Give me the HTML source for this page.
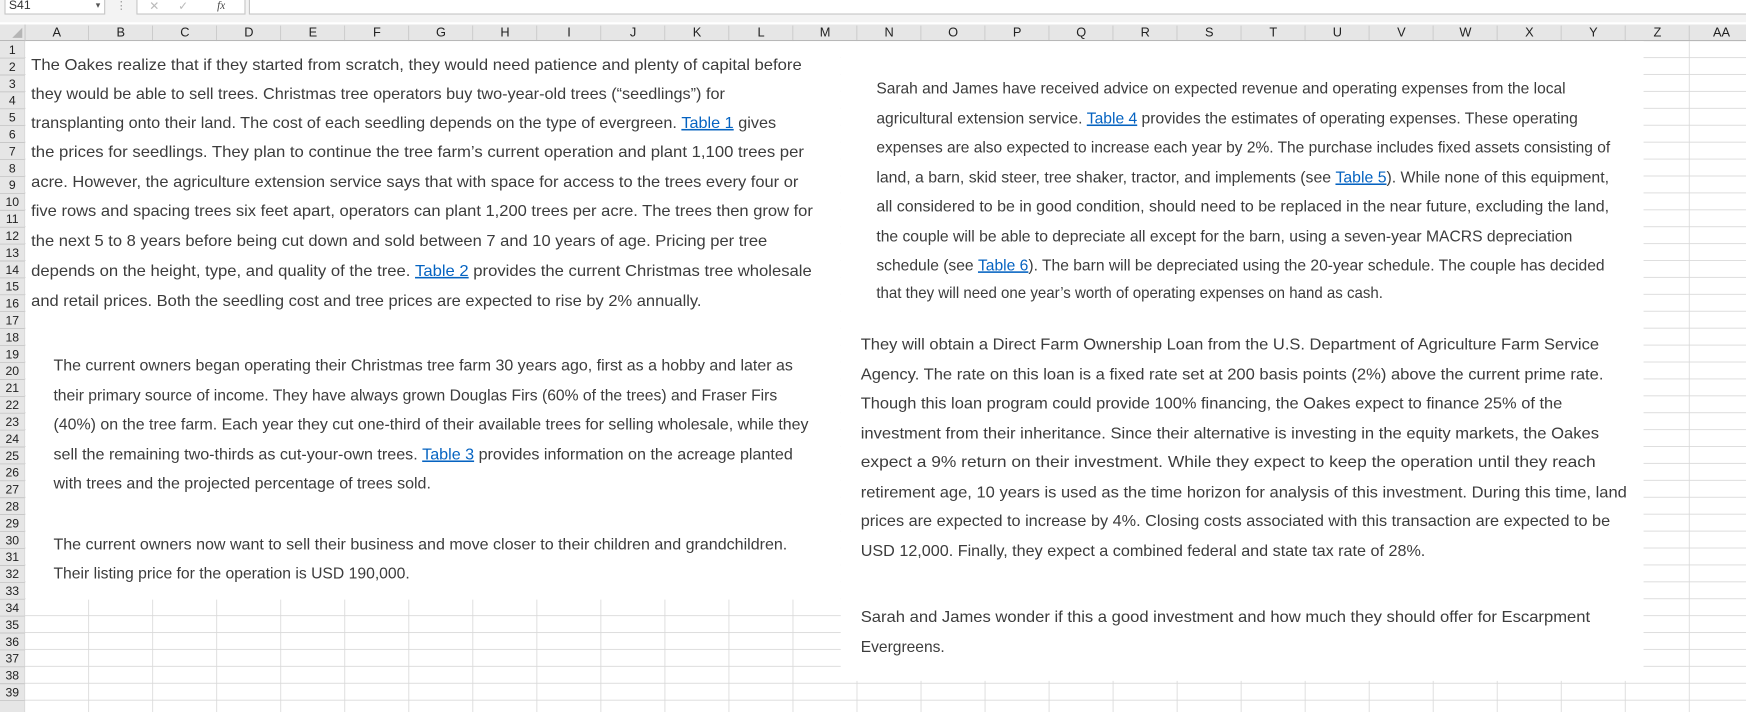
<!DOCTYPE html>
<html><head><meta charset="utf-8"><style>
html,body{margin:0;padding:0;background:#fff;overflow:hidden}
svg{display:block}
text{font-family:"Liberation Sans",sans-serif}
.t{font-size:14px;fill:#3c3c3c}
.l{fill:#0563c1;text-decoration:underline}
.h{font-size:11.5px;fill:#222;text-anchor:middle}
.r{font-size:11px;fill:#222;text-anchor:middle}
</style></head><body>
<svg width="1746" height="712" viewBox="0 0 1568 640" preserveAspectRatio="none" xmlns="http://www.w3.org/2000/svg">
<defs>
<pattern id="g" x="22.5" y="37" width="57.5" height="15.2" patternUnits="userSpaceOnUse">
<rect width="57.5" height="15.2" fill="#fff"/>
<line x1="57.2" y1="0" x2="57.2" y2="15.2" stroke="#d9d9d9" stroke-width="0.9"/>
<line x1="0" y1="14.9" x2="57.5" y2="14.9" stroke="#d9d9d9" stroke-width="0.9"/>
</pattern>
</defs>
<rect x="0" y="0" width="1568" height="20" fill="#f3f3f3"/>
<rect x="4.5" y="-2" width="89.5" height="14.6" fill="#fff" stroke="#c6c6c6"/>
<text x="8" y="8" style="font-size:11px;fill:#333">S41</text>
<text x="86" y="7" style="font-size:8px;fill:#555">▾</text>
<text x="104" y="8" style="font-size:10px;fill:#999">⋮</text>
<rect x="123" y="-2" width="97" height="14.6" fill="#fff" stroke="#c6c6c6"/>
<text x="134" y="9" style="font-size:11px;fill:#bbb">✕</text>
<text x="160" y="9" style="font-size:11px;fill:#bbb">✓</text>
<text x="195" y="8" style="font-size:10px;font-style:italic;fill:#444;font-family:'Liberation Serif',serif">fx</text>
<rect x="224" y="-2" width="1350" height="14.6" fill="#fff" stroke="#c6c6c6"/>
<rect x="0" y="22" width="1568" height="15" fill="#e6e6e6"/>
<line x1="0" y1="36.6" x2="1568" y2="36.6" stroke="#a8a8a8" stroke-width="0.8"/>
<polygon points="20,25 20,34 11,34" fill="#b5b5b5"/>
<line x1="22.5" y1="22" x2="22.5" y2="640" stroke="#c4c4c4" stroke-width="0.8"/>
<g>
<text class="h" x="51" y="33">A</text><text class="h" x="108.5" y="33">B</text><text class="h" x="166" y="33">C</text><text class="h" x="223.5" y="33">D</text><text class="h" x="281" y="33">E</text><text class="h" x="338.5" y="33">F</text><text class="h" x="396" y="33">G</text><text class="h" x="453.5" y="33">H</text><text class="h" x="511" y="33">I</text><text class="h" x="568.5" y="33">J</text><text class="h" x="626" y="33">K</text><text class="h" x="683.5" y="33">L</text><text class="h" x="741" y="33">M</text><text class="h" x="798.5" y="33">N</text><text class="h" x="856" y="33">O</text><text class="h" x="913.5" y="33">P</text><text class="h" x="971" y="33">Q</text><text class="h" x="1028.5" y="33">R</text><text class="h" x="1086" y="33">S</text><text class="h" x="1143.5" y="33">T</text><text class="h" x="1201" y="33">U</text><text class="h" x="1258.5" y="33">V</text><text class="h" x="1316" y="33">W</text><text class="h" x="1373.5" y="33">X</text><text class="h" x="1431" y="33">Y</text><text class="h" x="1488.5" y="33">Z</text><text class="h" x="1546" y="33">AA</text>
</g>
<g stroke="#c8c8c8" stroke-width="0.8">
<line x1="79.5" y1="23" x2="79.5" y2="36"/><line x1="137" y1="23" x2="137" y2="36"/><line x1="194.5" y1="23" x2="194.5" y2="36"/><line x1="252" y1="23" x2="252" y2="36"/><line x1="309.5" y1="23" x2="309.5" y2="36"/><line x1="367" y1="23" x2="367" y2="36"/><line x1="424.5" y1="23" x2="424.5" y2="36"/><line x1="482" y1="23" x2="482" y2="36"/><line x1="539.5" y1="23" x2="539.5" y2="36"/><line x1="597" y1="23" x2="597" y2="36"/><line x1="654.5" y1="23" x2="654.5" y2="36"/><line x1="712" y1="23" x2="712" y2="36"/><line x1="769.5" y1="23" x2="769.5" y2="36"/><line x1="827" y1="23" x2="827" y2="36"/><line x1="884.5" y1="23" x2="884.5" y2="36"/><line x1="942" y1="23" x2="942" y2="36"/><line x1="999.5" y1="23" x2="999.5" y2="36"/><line x1="1057" y1="23" x2="1057" y2="36"/><line x1="1114.5" y1="23" x2="1114.5" y2="36"/><line x1="1172" y1="23" x2="1172" y2="36"/><line x1="1229.5" y1="23" x2="1229.5" y2="36"/><line x1="1287" y1="23" x2="1287" y2="36"/><line x1="1344.5" y1="23" x2="1344.5" y2="36"/><line x1="1402" y1="23" x2="1402" y2="36"/><line x1="1459.5" y1="23" x2="1459.5" y2="36"/><line x1="1517" y1="23" x2="1517" y2="36"/>
</g>
<rect x="22.5" y="37" width="1546" height="603" fill="url(#g)"/>
<rect x="0" y="37" width="22" height="603" fill="#e6e6e6"/>
<g stroke="#bdbdbd" stroke-width="0.6">
<line x1="0" y1="52.2" x2="22" y2="52.2"/><line x1="0" y1="67.4" x2="22" y2="67.4"/><line x1="0" y1="82.6" x2="22" y2="82.6"/><line x1="0" y1="97.8" x2="22" y2="97.8"/><line x1="0" y1="113" x2="22" y2="113"/><line x1="0" y1="128.2" x2="22" y2="128.2"/><line x1="0" y1="143.4" x2="22" y2="143.4"/><line x1="0" y1="158.6" x2="22" y2="158.6"/><line x1="0" y1="173.8" x2="22" y2="173.8"/><line x1="0" y1="189" x2="22" y2="189"/><line x1="0" y1="204.2" x2="22" y2="204.2"/><line x1="0" y1="219.4" x2="22" y2="219.4"/><line x1="0" y1="234.6" x2="22" y2="234.6"/><line x1="0" y1="249.8" x2="22" y2="249.8"/><line x1="0" y1="265" x2="22" y2="265"/><line x1="0" y1="280.2" x2="22" y2="280.2"/><line x1="0" y1="295.4" x2="22" y2="295.4"/><line x1="0" y1="310.6" x2="22" y2="310.6"/><line x1="0" y1="325.8" x2="22" y2="325.8"/><line x1="0" y1="341" x2="22" y2="341"/><line x1="0" y1="356.2" x2="22" y2="356.2"/><line x1="0" y1="371.4" x2="22" y2="371.4"/><line x1="0" y1="386.6" x2="22" y2="386.6"/><line x1="0" y1="401.8" x2="22" y2="401.8"/><line x1="0" y1="417" x2="22" y2="417"/><line x1="0" y1="432.2" x2="22" y2="432.2"/><line x1="0" y1="447.4" x2="22" y2="447.4"/><line x1="0" y1="462.6" x2="22" y2="462.6"/><line x1="0" y1="477.8" x2="22" y2="477.8"/><line x1="0" y1="493" x2="22" y2="493"/><line x1="0" y1="508.2" x2="22" y2="508.2"/><line x1="0" y1="523.4" x2="22" y2="523.4"/><line x1="0" y1="538.6" x2="22" y2="538.6"/><line x1="0" y1="553.8" x2="22" y2="553.8"/><line x1="0" y1="569" x2="22" y2="569"/><line x1="0" y1="584.2" x2="22" y2="584.2"/><line x1="0" y1="599.4" x2="22" y2="599.4"/><line x1="0" y1="614.6" x2="22" y2="614.6"/><line x1="0" y1="629.8" x2="22" y2="629.8"/>
</g>
<g>
<text class="r" x="11" y="48.5">1</text><text class="r" x="11" y="63.7">2</text><text class="r" x="11" y="78.9">3</text><text class="r" x="11" y="94.1">4</text><text class="r" x="11" y="109.3">5</text><text class="r" x="11" y="124.5">6</text><text class="r" x="11" y="139.7">7</text><text class="r" x="11" y="154.9">8</text><text class="r" x="11" y="170.1">9</text><text class="r" x="11" y="185.3">10</text><text class="r" x="11" y="200.5">11</text><text class="r" x="11" y="215.7">12</text><text class="r" x="11" y="230.9">13</text><text class="r" x="11" y="246.1">14</text><text class="r" x="11" y="261.3">15</text><text class="r" x="11" y="276.5">16</text><text class="r" x="11" y="291.7">17</text><text class="r" x="11" y="306.9">18</text><text class="r" x="11" y="322.1">19</text><text class="r" x="11" y="337.3">20</text><text class="r" x="11" y="352.5">21</text><text class="r" x="11" y="367.7">22</text><text class="r" x="11" y="382.9">23</text><text class="r" x="11" y="398.1">24</text><text class="r" x="11" y="413.3">25</text><text class="r" x="11" y="428.5">26</text><text class="r" x="11" y="443.7">27</text><text class="r" x="11" y="458.9">28</text><text class="r" x="11" y="474.1">29</text><text class="r" x="11" y="489.3">30</text><text class="r" x="11" y="504.5">31</text><text class="r" x="11" y="519.7">32</text><text class="r" x="11" y="534.9">33</text><text class="r" x="11" y="550.1">34</text><text class="r" x="11" y="565.3">35</text><text class="r" x="11" y="580.5">36</text><text class="r" x="11" y="595.7">37</text><text class="r" x="11" y="610.9">38</text><text class="r" x="11" y="626.1">39</text>
</g>
<rect x="23" y="37" width="732" height="502" fill="#fff"/>
<rect x="755" y="37" width="721" height="575" fill="#fff"/>
<g>
<text class="t" x="28" y="63" textLength="692" lengthAdjust="spacingAndGlyphs">The Oakes realize that if they started from scratch, they would need patience and plenty of capital before</text>
<text class="t" x="28" y="89" textLength="623" lengthAdjust="spacingAndGlyphs">they would be able to sell trees. Christmas tree operators buy two-year-old trees (“seedlings”) for</text>
<text class="t" x="28" y="115" textLength="669" lengthAdjust="spacingAndGlyphs">transplanting onto their land. The cost of each seedling depends on the type of evergreen. <tspan class="l">Table 1</tspan> gives</text>
<text class="t" x="28" y="141" textLength="694" lengthAdjust="spacingAndGlyphs">the prices for seedlings. They plan to continue the tree farm’s current operation and plant 1,100 trees per</text>
<text class="t" x="28" y="168" textLength="689" lengthAdjust="spacingAndGlyphs">acre. However, the agriculture extension service says that with space for access to the trees every four or</text>
<text class="t" x="28" y="194" textLength="702" lengthAdjust="spacingAndGlyphs">five rows and spacing trees six feet apart, operators can plant 1,200 trees per acre. The trees then grow for</text>
<text class="t" x="28" y="221" textLength="661" lengthAdjust="spacingAndGlyphs">the next 5 to 8 years before being cut down and sold between 7 and 10 years of age. Pricing per tree</text>
<text class="t" x="28" y="248" textLength="701" lengthAdjust="spacingAndGlyphs">depends on the height, type, and quality of the tree. <tspan class="l">Table 2</tspan> provides the current Christmas tree wholesale</text>
<text class="t" x="28" y="275" textLength="602" lengthAdjust="spacingAndGlyphs">and retail prices. Both the seedling cost and tree prices are expected to rise by 2% annually.</text>
<text class="t" x="48" y="333" textLength="664" lengthAdjust="spacingAndGlyphs">The current owners began operating their Christmas tree farm 30 years ago, first as a hobby and later as</text>
<text class="t" x="48" y="360" textLength="650" lengthAdjust="spacingAndGlyphs">their primary source of income. They have always grown Douglas Firs (60% of the trees) and Fraser Firs</text>
<text class="t" x="48" y="386" textLength="678" lengthAdjust="spacingAndGlyphs">(40%) on the tree farm. Each year they cut one-third of their available trees for selling wholesale, while they</text>
<text class="t" x="48" y="413" textLength="664" lengthAdjust="spacingAndGlyphs">sell the remaining two-thirds as cut-your-own trees. <tspan class="l">Table 3</tspan> provides information on the acreage planted</text>
<text class="t" x="48" y="439" textLength="339" lengthAdjust="spacingAndGlyphs">with trees and the projected percentage of trees sold.</text>
<text class="t" x="48" y="494" textLength="659" lengthAdjust="spacingAndGlyphs">The current owners now want to sell their business and move closer to their children and grandchildren.</text>
<text class="t" x="48" y="520" textLength="320" lengthAdjust="spacingAndGlyphs">Their listing price for the operation is USD 190,000.</text>
<text class="t" x="787" y="84" textLength="619" lengthAdjust="spacingAndGlyphs">Sarah and James have received advice on expected revenue and operating expenses from the local</text>
<text class="t" x="787" y="111" textLength="630" lengthAdjust="spacingAndGlyphs">agricultural extension service. <tspan class="l">Table 4</tspan> provides the estimates of operating expenses. These operating</text>
<text class="t" x="787" y="137" textLength="659" lengthAdjust="spacingAndGlyphs">expenses are also expected to increase each year by 2%. The purchase includes fixed assets consisting of</text>
<text class="t" x="787" y="164" textLength="658" lengthAdjust="spacingAndGlyphs">land, a barn, skid steer, tree shaker, tractor, and implements (see <tspan class="l">Table 5</tspan>). While none of this equipment,</text>
<text class="t" x="787" y="190" textLength="658" lengthAdjust="spacingAndGlyphs">all considered to be in good condition, should need to be replaced in the near future, excluding the land,</text>
<text class="t" x="787" y="217" textLength="625" lengthAdjust="spacingAndGlyphs">the couple will be able to depreciate all except for the barn, using a seven-year MACRS depreciation</text>
<text class="t" x="787" y="243" textLength="654" lengthAdjust="spacingAndGlyphs">schedule (see <tspan class="l">Table 6</tspan>). The barn will be depreciated using the 20-year schedule. The couple has decided</text>
<text class="t" x="787" y="268" textLength="455" lengthAdjust="spacingAndGlyphs">that they will need one year’s worth of operating expenses on hand as cash.</text>
<text class="t" x="773" y="314" textLength="663" lengthAdjust="spacingAndGlyphs">They will obtain a Direct Farm Ownership Loan from the U.S. Department of Agriculture Farm Service</text>
<text class="t" x="773" y="341" textLength="667" lengthAdjust="spacingAndGlyphs">Agency. The rate on this loan is a fixed rate set at 200 basis points (2%) above the current prime rate.</text>
<text class="t" x="773" y="367" textLength="630" lengthAdjust="spacingAndGlyphs">Though this loan program could provide 100% financing, the Oakes expect to finance 25% of the</text>
<text class="t" x="773" y="394" textLength="663" lengthAdjust="spacingAndGlyphs">investment from their inheritance. Since their alternative is investing in the equity markets, the Oakes</text>
<text class="t" x="773" y="420" textLength="660" lengthAdjust="spacingAndGlyphs">expect a 9% return on their investment. While they expect to keep the operation until they reach</text>
<text class="t" x="773" y="447" textLength="688" lengthAdjust="spacingAndGlyphs">retirement age, 10 years is used as the time horizon for analysis of this investment. During this time, land</text>
<text class="t" x="773" y="473" textLength="673" lengthAdjust="spacingAndGlyphs">prices are expected to increase by 4%. Closing costs associated with this transaction are expected to be</text>
<text class="t" x="773" y="500" textLength="507" lengthAdjust="spacingAndGlyphs">USD 12,000. Finally, they expect a combined federal and state tax rate of 28%.</text>
<text class="t" x="773" y="559" textLength="655" lengthAdjust="spacingAndGlyphs">Sarah and James wonder if this a good investment and how much they should offer for Escarpment</text>
<text class="t" x="773" y="586">Evergreens.</text>
</g>
</svg>
</body></html>
